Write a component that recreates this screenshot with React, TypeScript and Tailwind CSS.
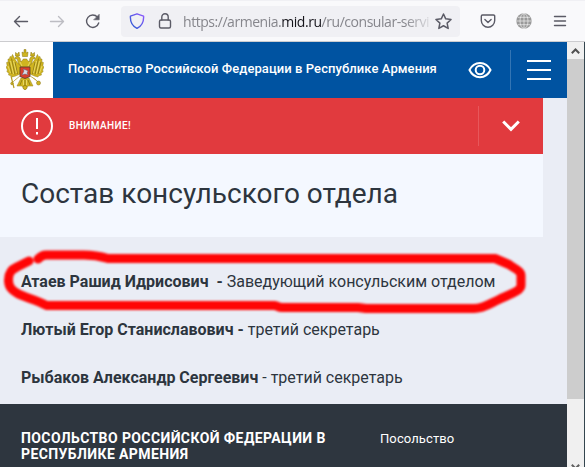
import type { ReactNode } from 'react'

const staff = [
  { name: 'Атаев Рашид Идрисович\u00a0 -', sep: ' ', role: 'Заведующий консульским отделом' },
  { name: 'Лютый Егор Станиславович -', sep: ' ', role: 'третий секретарь' },
  { name: 'Рыбаков Александр Сергеевич', sep: ' - ', role: 'третий секретарь' },
]

function Icon({ className, children }: { className: string; children: ReactNode }) {
  return (
    <svg className={className} viewBox="0 0 16 16" fill="none" stroke="currentColor" strokeWidth="1.4" strokeLinecap="round" strokeLinejoin="round">
      {children}
    </svg>
  )
}

function BrowserBar() {
  return (
    <div className="h-[42px] shrink-0 flex items-center border-t border-b border-t-[#f0f0f4] border-b-[#cccccf] bg-[#f9f9fb] text-[#5b5b66]">
      <Icon className="w-4 h-4 ml-[13px]"><path d="M14.5 8.500H1.500M6.500 3.500 1.500 8.500l5 5" /></Icon>
      <Icon className="w-4 h-4 ml-[20px] text-[#bdbdc3]"><path d="M1.500 8.500h13M9.500 3.500l5 5-5 5" /></Icon>
      <Icon className="w-4 h-4 ml-[20px]">
        <path d="M13.700 10A6.200 6.200 0 1 1 12.500 4.200" />
        <path d="M14.200 1.600v5.200H9z" fill="currentColor" strokeWidth="0.6" />
      </Icon>
      <div className="ml-[20px] w-[339px] h-[31px] flex items-center rounded bg-[#f0f0f4] pl-[8px]">
        <svg className="w-4 h-4 shrink-0" viewBox="0 0 16 16" fill="none" strokeWidth="1.4" strokeLinejoin="round">
          <defs>
            <linearGradient id="shield" x1="0" y1="1" x2="1" y2="0">
              <stop offset="0.2" stopColor="#3a5bd9" />
              <stop offset="1" stopColor="#9059ff" />
            </linearGradient>
          </defs>
          <path d="M8 .8 14.600 3.200c.3 5.500-1.500 9.600-6.600 12.200C2.900 12.800 1.100 8.700 1.400 3.200z" stroke="url(#shield)" />
        </svg>
        <Icon className="w-4 h-4 shrink-0 ml-[12px]">
          <rect x="2.500" y="7" width="11" height="8" rx="1.500" />
          <path d="M4.800 7V4a3.200 3.200 0 0 1 6.400 0v3" />
        </Icon>
        <div className="ml-[10px] w-[252px] pt-px whitespace-nowrap font-['Open_Sans',sans-serif] text-[14px] tracking-[-0.46px] text-[#86868c] [mask-image:linear-gradient(to_right,black_88%,transparent)]">
          https://armenia.<span className="text-[#15141a]">mid.ru</span>/ru/consular-servi
        </div>
        <Icon className="w-[17px] h-[17px] shrink-0">
          <path d="m8 .9 2.100 4.600 5 .6-3.700 3.400 1 5L8 12l-4.400 2.500 1-5L.9 6.100l5-.6z" />
        </Icon>
      </div>
      <Icon className="w-4 h-4 ml-[20px]">
        <path d="M2.500 2h11a1.200 1.200 0 0 1 1.200 1.200V7.500a6.700 6.700 0 0 1-13.400 0V3.200A1.200 1.200 0 0 1 2.500 2z" />
        <path d="m4.900 6.500 3.100 3 3.100-3" />
      </Icon>
      <svg className="w-4 h-4 ml-[20px]" viewBox="0 0 16 16" fill="none">
        <circle cx="8" cy="8" r="7.700" fill="#999999" />
        <g stroke="#f1f1f1" strokeWidth="0.700">
          <path d="M8 .5v15M.5 8h15M1.800 4.300h12.400M1.800 11.700h12.400" />
          <ellipse cx="8" cy="8" rx="4" ry="7.500" />
        </g>
      </svg>
      <Icon className="w-4 h-4 ml-[20px]"><path d="M2.500 3.500h11M2.500 8h11M2.500 12.500h11" /></Icon>
    </div>
  )
}

function Emblem() {
  return (
    <svg className="w-[38px] h-[43px]" viewBox="0 0 38 43">
      {/* wings */}
      <g fill="#d0b520" stroke="#93801a" strokeWidth="0.500">
        <path d="M15 16C11 15 9 10 6.500 5.500L5.500 8 4 7.500 3.500 10 2 10l.2 3L.6 13.500 1.200 17 0 18l1.500 3-.7 1.500L3 24.500l-.5 1.500 3 .8.5 1.200 3.500-1L14 25zM23 16c4-1 6-6 8.500-10.500l1 2.500 1.500-.5.500 2.500 1.500 0-.2 3 1.600.5-.6 3.500L38 18l-1.500 3 .7 1.500-2.200 2 .5 1.500-3 .8-.5 1.200-3.500-1L24 25z" />
        <path d="M14 27 9 31l-3 3M24 27l5 3 4 4M15 29l-3 6-1 2h5l3 4 3-4h5l-1-2-3-6z" />
      </g>
      {/* heads and crowns */}
      <g fill="#d0b520" stroke="#857010" strokeWidth="0.500">
        <path d="M13 8c-2-1.300-3.500-.5-4 1.500l2.500.8c0 3 1.500 6 4.500 8h6c3-2 4.500-5 4.500-8L29 9.500C28.500 7.500 27 6.700 25 8c-1.500 1-1.500 3-1.300 4.500-1.500 0-2.300-1-3-2.500h-3.400c-.7 1.500-1.500 2.500-3 2.500C14.500 11 14.500 9 13 8z" />
        <path d="m9.500 3.500 2 1.500L13 3l.5 4h-4zM28.500 3.500l-2 1.500L25 3l-.5 4h4zM16 3l2 1V.6h2V4l2-1-.5 4.500h-5z" />
        <circle cx="19" cy="38.500" r="2" />
        <circle cx="6" cy="34.500" r="1.300" />
        <circle cx="32.500" cy="34" r="2" />
        <path d="M5 27l3 12" stroke="#b39b1c" strokeWidth="1.200" />
      </g>
      {/* feathers */}
      <g fill="none" stroke="#7b6a12" strokeWidth="0.700">
        <path d="M3 13l3 12M5.500 9.500l3.500 16M9 13l2.500 12M35 13l-3 12M32.500 9.500l-3.500 16M29 13l-2.500 12M16 31l-2 5M19 31v6M22 31l2 5" />
      </g>
      <g fill="none" stroke="#f3e680" strokeWidth="0.700">
        <path d="M2 17l2.500 7M4.500 12l3 13M7.500 12l3 12M36 17l-2.500 7M33.500 12l-3 13M30.500 12l-3 12M14 13l2 4M24 13l-2 4M17.500 31v5M20.500 31v5" />
      </g>
      <path d="M14 18h10v9.500l-5 2-5-2z" fill="#d9402c" stroke="#57402d" strokeWidth="0.800" />
      <path d="m16 26 2-4-1-2 3 1 2 1-1 2 1 2-3-1z" fill="#d8dce4" stroke="#4a5470" strokeWidth="0.400" />
    </svg>
  )
}

function SiteHeader() {
  return (
    <header className="h-14 shrink-0 flex items-center bg-[#0053a1] text-white">
      <div className="w-[53px] h-full flex items-center justify-center bg-white pr-[3px]">
        <Emblem />
      </div>
      <div className="ml-[15px] w-[400px] whitespace-nowrap text-[13px] leading-5 font-medium tracking-[0.07px] pb-[2px]">
        Посольство Российской Федерации в Республике Армения
      </div>
      <svg className="w-6 h-[18px] shrink-0" viewBox="0 0 24 18" fill="none" stroke="white" strokeWidth="2">
        <path d="M1.500 9C6-.5 18-.5 22.500 9 18 18.500 6 18.500 1.500 9z" />
        <circle cx="12" cy="9" r="4.300" />
      </svg>
      <div className="ml-[18px] w-px h-10 bg-[#3375b4]" />
      <div className="ml-[16px] w-6 h-5 flex flex-col justify-between">
        <div className="h-[2px] bg-white" />
        <div className="h-[2px] bg-white" />
        <div className="h-[2px] bg-white" />
      </div>
    </header>
  )
}

function Alert() {
  return (
    <div className="w-[543px] h-14 shrink-0 flex items-center bg-[#e13a3e] text-white">
      <svg className="w-8 h-8 ml-[21px]" viewBox="0 0 32 32" fill="none">
        <circle cx="16" cy="16" r="15" stroke="white" strokeWidth="2" />
        <path d="M15 8h2v11h-2zM15 22h2v2.500h-2z" fill="white" />
      </svg>
      <div className="ml-4 w-[409px] text-[10px] font-medium tracking-[0.4px] pb-px">ВНИМАНИЕ!</div>
      <div className="w-px h-10 bg-[#e7575b]" />
      <svg className="ml-[23px] w-[18px] h-3" viewBox="0 0 18 12" fill="none" stroke="white" strokeWidth="3">
        <path d="m1.200 1.500 7.800 7.800 7.800-7.800" />
      </svg>
    </div>
  )
}

function Marker() {
  return (
    <svg className="absolute left-0 top-[245px] w-[535px] h-[75px] blur-[0.9px]" viewBox="0 245 535 75" fill="none" stroke="#ff0505" strokeWidth="9" strokeLinecap="round" strokeLinejoin="round">
      <path d="M29 261 17 267C10 270 8.500 274 8.500 280c0 7 3 10 10 14 8 4 19 6 28 11.500H274c3 0 4 2 8 2H358l8 1H474c10 0 16-5 25-9 13-6 22-9 22-14v-10c0-5-7-7-12-11l-14-6H108c-7-2-15-3.500-24-3.500H46c-3 0-5 1-8 4" />
    </svg>
  )
}

function Scrollbar() {
  return (
    <div className="w-[18px] shrink-0 flex flex-col bg-[#f0f0f0] border-r border-[#34464f] overflow-hidden">
      <div className="h-[17px] shrink-0 flex items-center justify-center">
        <svg className="w-[9px] h-[6px]" viewBox="0 0 9 6" fill="none" stroke="#505050" strokeWidth="2">
          <path d="M.8 5.200 4.500 1.500l3.700 3.700" />
        </svg>
      </div>
      <div className="h-[340px] shrink-0 bg-[#cdcdcd]" />
      <div className="h-[65px] shrink-0" />
      <svg className="w-[9px] h-[6px] shrink-0 self-center" viewBox="0 0 9 6" fill="none" stroke="#606060" strokeWidth="2">
        <path d="M.8 .8 4.500 4.500 8.200.8" />
      </svg>
    </div>
  )
}

export default function App() {
  return (
    <div className="relative w-[585px] h-[467px] flex flex-col overflow-hidden font-[Roboto,sans-serif] text-[#2d353e]">
      <BrowserBar />
      <div className="flex-1 min-h-0 flex">
        <div className="w-[567px] flex flex-col bg-[#eaedf5] overflow-hidden">
          <SiteHeader />
          <Alert />
          <div className="w-[543px] h-[83px] shrink-0 flex items-center bg-[#f4f8ff] pl-[21px] pb-1">
            <h1 className="text-[28px] leading-9 whitespace-nowrap">Состав консульского отдела</h1>
          </div>
          <main className="h-[167px] shrink-0 flex flex-col gap-6 pl-[21px] pt-[33px] text-base leading-6 whitespace-nowrap">
            {staff.map((person) => (
              <p key={person.name}>
                <b>{person.name}</b>
                {person.sep}
                {person.role}
              </p>
            ))}
          </main>
          <footer className="flex-1 flex items-start bg-[#2e363f] pl-[21px] pt-[26px] text-white">
            <div className="w-[359px] text-sm leading-4 font-bold tracking-[0.4px] whitespace-nowrap">
              ПОСОЛЬСТВО РОССИЙСКОЙ ФЕДЕРАЦИИ В<br />
              РЕСПУБЛИКЕ АРМЕНИЯ
            </div>
            <div className="text-[13px] leading-4 pt-px tracking-[0.1px]">Посольство</div>
          </footer>
        </div>
        <Scrollbar />
      </div>
      <Marker />
    </div>
  )
}
